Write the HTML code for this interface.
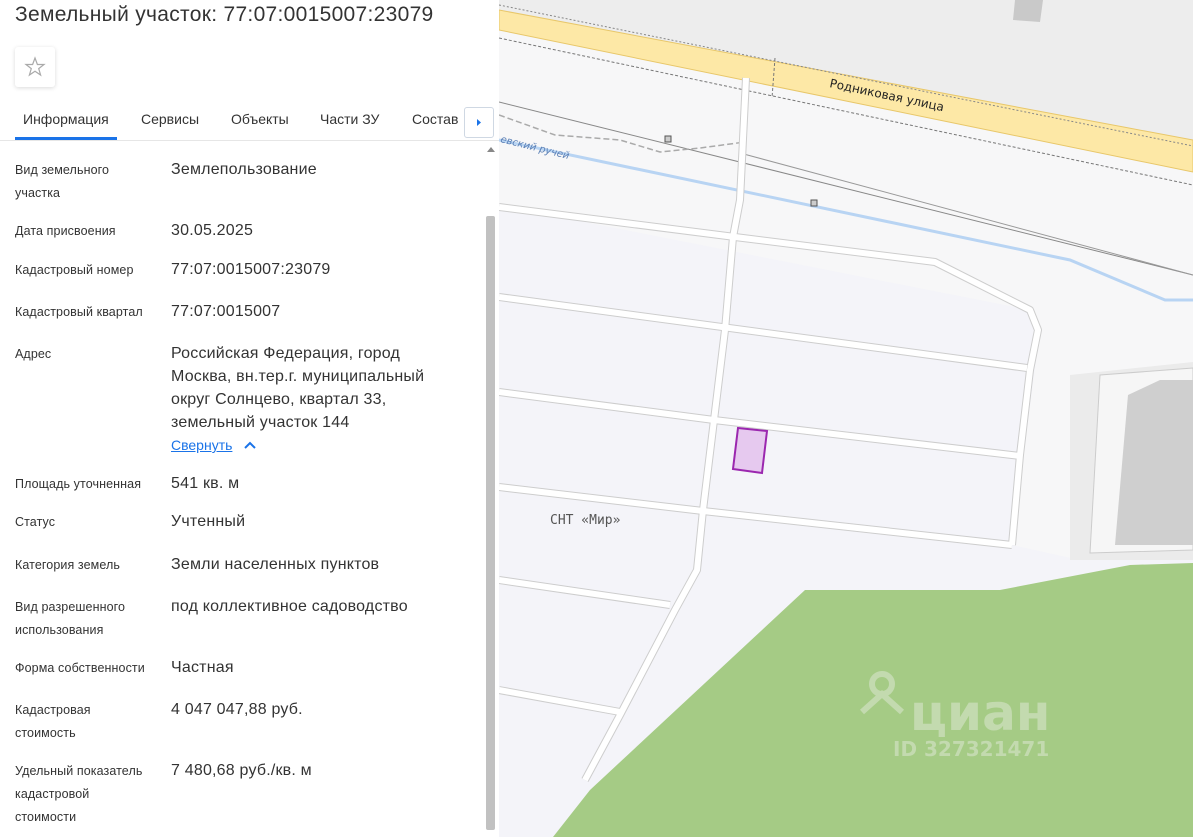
<!DOCTYPE html>
<html><head><meta charset="utf-8"><style>
*{margin:0;padding:0;box-sizing:border-box}
body{width:1193px;height:837px;overflow:hidden;position:relative;font-family:"Liberation Sans",sans-serif;background:#fff}
#panel{position:absolute;left:0;top:0;width:499px;height:837px;background:#fff;color:#333}
h1{position:absolute;left:15px;top:3px;font-size:21px;letter-spacing:0.3px;font-weight:normal;color:#333}
.star{position:absolute;left:15px;top:47px;width:40px;height:40px;border-radius:3px;box-shadow:0 1px 4px rgba(0,0,0,.15);background:#fff}
.tabs{position:absolute;left:0;top:100px;width:499px;height:41px;border-bottom:1px solid #e6e6e6}
.tab{position:absolute;top:11px;font-size:14px;color:#333}
.ul{position:absolute;left:15px;top:37px;width:102px;height:3px;background:#1a73e8}
.arr{position:absolute;left:464px;top:107px;width:30px;height:31px;border:1px solid #cfd8e3;border-radius:3px;background:#fff}
.row{position:absolute;left:15px;font-size:12.5px;letter-spacing:0.1px;color:#333;line-height:23px;width:150px}
.val{position:absolute;left:171px;font-size:16px;letter-spacing:0.2px;color:#333;line-height:23px;width:300px}
.sb{position:absolute;left:486px;top:216px;width:9px;height:614px;background:#c1c1c1;border-radius:2px}
</style></head><body>
<svg style="position:absolute;left:499px;top:0" width="694" height="837" viewBox="499 0 694 837">
<rect x="499" y="0" width="694" height="837" fill="#f7f7f8"/>
<polygon points="499,0 1193,0 1193,140 499,10" fill="#ededed"/>
<polygon points="1015,0 1043,0 1040,22 1013,20" fill="#c9c9c9"/>
<polygon points="499,205 1030,310 1040,330 1012,545 1080,560 1193,545 1193,837 499,837" fill="#f4f4f9"/>
<polygon points="499,10 1193,140 1193,172 499,30" fill="#fde8a6" stroke="#e8c76a" stroke-width="1"/>
<line x1="499" y1="5" x2="1193" y2="146" stroke="#888" stroke-dasharray="2,2"/>
<line x1="499" y1="38" x2="1193" y2="185" stroke="#777" stroke-dasharray="3,2"/>
<line x1="775" y1="58" x2="772" y2="98" stroke="#777" stroke-dasharray="3,2"/>
<line x1="499" y1="102" x2="1193" y2="275" stroke="#888"/>
<line x1="740" y1="153" x2="1193" y2="275" stroke="#999"/>
<polyline points="499,140 1070,260 1165,300 1193,300" fill="none" stroke="#b8d4f3" stroke-width="3"/>
<polyline points="499,115 555,135 620,140 660,152 700,148 745,142" fill="none" stroke="#aaa" stroke-dasharray="6,3" stroke-width="1.5"/>
<g fill="none" stroke-linejoin="round">
<g stroke="#cdcdcd" stroke-width="8">
<polyline points="746,78 740,200 733,237 725,330 714,420 703,510 697,570 675,610 620,715 585,780"/>
<polyline points="499,207 735,237 935,262 1030,310 1038,330 1030,370 1020,455 1012,545"/>
<polyline points="499,297 1027,368"/>
<polyline points="499,392 714,420 1020,456"/>
<polyline points="499,487 703,511 1012,545"/>
<polyline points="499,580 670,605"/>
<polyline points="499,690 620,712"/>
</g>
<g stroke="#fff" stroke-width="6">
<polyline points="746,78 740,200 733,237 725,330 714,420 703,510 697,570 675,610 620,715 585,780"/>
<polyline points="499,207 735,237 935,262 1030,310 1038,330 1030,370 1020,455 1012,545"/>
<polyline points="499,297 1027,368"/>
<polyline points="499,392 714,420 1020,456"/>
<polyline points="499,487 703,511 1012,545"/>
<polyline points="499,580 670,605"/>
<polyline points="499,690 620,712"/>
</g></g>
<text x="829" y="87" font-size="12" fill="#222" transform="rotate(12 829 87)" font-family="DejaVu Sans">Родниковая  улица</text>
<text x="500" y="142" font-size="10" fill="#5a7fb5" transform="rotate(14 500 142)" font-family="DejaVu Sans" font-style="italic">евский ручей</text>
<polygon points="1070,375 1193,362 1193,560 1070,560" fill="#ebebeb"/>
<polygon points="1100,375 1193,368 1193,550 1090,553" fill="#f6f6f6" stroke="#ccc"/>
<polygon points="1128,395 1160,380 1193,380 1193,545 1115,545" fill="#cfcfcf"/>
<polygon points="553,837 590,790 805,590 1000,590 1130,565 1193,563 1193,837" fill="#a5cb85"/>
<polygon points="738,428 767,431 762,473 733,469" fill="#e6c9ef" stroke="#9b27af" stroke-width="2"/>
<text x="550" y="524" font-size="13" fill="#555" font-family="DejaVu Sans Mono">СНТ «Мир»</text>
<g fill="none" stroke="#c3daaf" stroke-width="6"><circle cx="882" cy="684" r="10"/><polyline points="862,712 882,694 902,712"/></g>
<text x="910" y="730" font-size="50" fill="#c3daaf" font-family="DejaVu Sans" font-weight="bold">циан</text>
<text x="893" y="756" font-size="20" fill="#c3daaf" font-family="DejaVu Sans" font-weight="bold">ID 327321471</text>
<rect x="665" y="136" width="6" height="6" fill="#ccc" stroke="#555"/><rect x="811" y="200" width="6" height="6" fill="#ccc" stroke="#555"/>
</svg>
<div id="panel">
<h1>Земельный участок: 77:07:0015007:23079</h1>
<div class="star"><svg width="40" height="40"><polygon points="20,11 22.4,17.5 29,17.5 23.7,21.6 25.6,28 20,24.2 14.4,28 16.3,21.6 11,17.5 17.6,17.5" fill="none" stroke="#aaa" stroke-width="1.2"/></svg></div>
<div class="tabs">
<span class="tab" style="left:23px">Информация</span><span class="tab" style="left:141px">Сервисы</span><span class="tab" style="left:231px">Объекты</span><span class="tab" style="left:320px">Части ЗУ</span><span class="tab" style="left:412px">Состав</span>
<div class="ul"></div></div>
<div class="arr"><svg width="28" height="29"><polygon points="12,11 16,14.5 12,18" fill="#1a73e8"/></svg></div>
<svg style="position:absolute;left:486px;top:145px" width="10" height="8"><polygon points="1,7 5,2 9,7" fill="#888"/></svg>
<div class="sb"></div>
<div class="row" style="top:159px">Вид земельного<br>участка</div><div class="val" style="top:158px">Землепользование</div>
<div class="row" style="top:220px">Дата присвоения</div><div class="val" style="top:219px">30.05.2025</div>
<div class="row" style="top:259px">Кадастровый номер</div><div class="val" style="top:258px">77:07:0015007:23079</div>
<div class="row" style="top:301px">Кадастровый квартал</div><div class="val" style="top:300px">77:07:0015007</div>
<div class="row" style="top:343px">Адрес</div><div class="val" style="top:342px">Российская Федерация, город<br>Москва, вн.тер.г. муниципальный<br>округ Солнцево, квартал 33,<br>земельный участок 144<br><span style="font-size:14px;letter-spacing:0;color:#1a73e8;text-decoration:underline">Свернуть</span> <svg width="14" height="10" style="margin-left:6px"><polyline points="2,8 7,3 12,8" fill="none" stroke="#1a73e8" stroke-width="2"/></svg></div>
<div class="row" style="top:473px">Площадь уточненная</div><div class="val" style="top:472px">541 кв. м</div>
<div class="row" style="top:511px">Статус</div><div class="val" style="top:510px">Учтенный</div>
<div class="row" style="top:554px">Категория земель</div><div class="val" style="top:553px">Земли населенных пунктов</div>
<div class="row" style="top:596px">Вид разрешенного<br>использования</div><div class="val" style="top:595px">под коллективное садоводство</div>
<div class="row" style="top:657px">Форма собственности</div><div class="val" style="top:656px">Частная</div>
<div class="row" style="top:699px">Кадастровая<br>стоимость</div><div class="val" style="top:698px">4 047 047,88 руб.</div>
<div class="row" style="top:760px">Удельный показатель<br>кадастровой<br>стоимости</div><div class="val" style="top:759px">7 480,68 руб./кв. м</div>
</div>
</body></html>
